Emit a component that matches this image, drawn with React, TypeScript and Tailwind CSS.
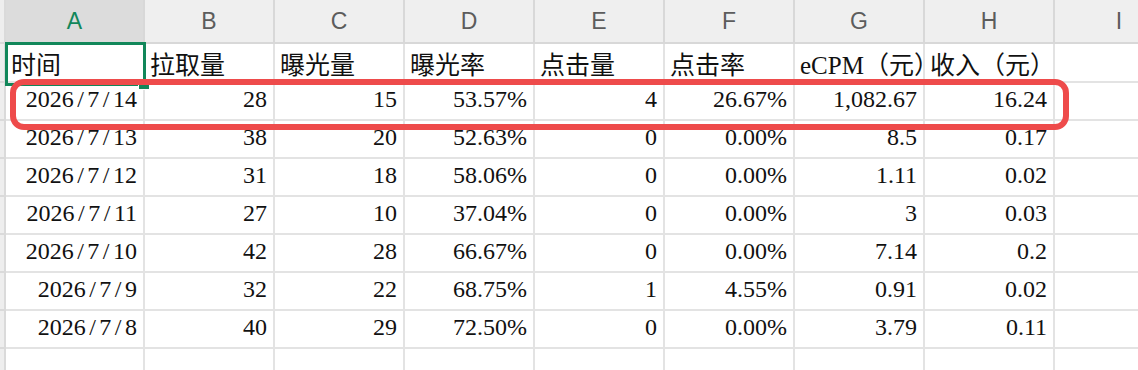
import React from "react"

const cols = ["A", "B", "C", "D", "E", "F", "G", "H", "I"]
const titles = ["时间", "拉取量", "曝光量", "曝光率", "点击量", "点击率", "eCPM（元）", "收入（元）", ""]

const rows = [
  ["2026/7/14", "28", "15", "53.57%", "4", "26.67%", "1,082.67", "16.24"],
  ["2026/7/13", "38", "20", "52.63%", "0", "0.00%", "8.5", "0.17"],
  ["2026/7/12", "31", "18", "58.06%", "0", "0.00%", "1.11", "0.02"],
  ["2026/7/11", "27", "10", "37.04%", "0", "0.00%", "3", "0.03"],
  ["2026/7/10", "42", "28", "66.67%", "0", "0.00%", "7.14", "0.2"],
  ["2026/7/9", "32", "22", "68.75%", "1", "4.55%", "0.91", "0.02"],
  ["2026/7/8", "40", "29", "72.50%", "0", "0.00%", "3.79", "0.11"],
]

const serif = "font-['Liberation_Serif','Noto_Sans_CJK_SC',serif]"

const widthOf = (i: number) => (i === 0 ? "w-[139px]" : "w-[130px]")

const DateText = ({ value }: { value: string }) => {
  const parts = value.split("/")
  return (
    <>
      {parts.map((p, i) => (
        <React.Fragment key={i}>
          {i > 0 && <span className="mx-[3.5px]">/</span>}
          {p}
        </React.Fragment>
      ))}
    </>
  )
}

const RowHead = ({ h }: { h: string }) => (
  <div className={`${h} w-[6px] shrink-0 box-border bg-[#eeeeee] border-r-2 border-b-2 border-[#dadada]`} />
)

export default function App() {
  return (
    <div className={`relative w-[1138px] h-[370px] overflow-hidden bg-white text-[#111] ${serif}`}>
      {/* column letters */}
      <div className="flex h-[44px]">
        <RowHead h="h-[44px]" />
        {cols.map((c, i) => (
          <div
            key={c}
            className={`${widthOf(i)} shrink-0 box-border h-[44px] flex items-center justify-center border-r-2 border-b-2 border-[#d8d8d8] font-['Liberation_Sans',sans-serif] text-[23px] ${
              i === 0 ? "bg-[#dcdcdc] text-[#12875a]" : "bg-[#efefef] text-[#5c5c5c]"
            }`}
          >
            {c}
          </div>
        ))}
      </div>

      {/* titles */}
      <div className="flex h-[39px]">
        <RowHead h="h-[39px]" />
        {titles.map((t, i) => (
          <div
            key={i}
            className={`${widthOf(i)} shrink-0 box-border h-[39px] flex items-end pl-[5px] pb-[3px] border-r-2 border-b-2 border-[#e3e3e3] overflow-hidden whitespace-nowrap text-[25px] leading-none`}
          >
            {t}
          </div>
        ))}
      </div>

      {/* data */}
      {rows.map((r, ri) => (
        <div key={ri} className="flex h-[38px]">
          <RowHead h="h-[38px]" />
          {[...r, ""].map((v, i) => (
            <div
              key={i}
              className={`${widthOf(i)} shrink-0 box-border h-[38px] flex items-end justify-end pr-[6px] pb-[8px] border-r-2 border-b-2 border-[#e3e3e3] overflow-hidden whitespace-nowrap text-[24px] leading-none`}
            >
              {i === 0 ? <DateText value={v} /> : v}
            </div>
          ))}
        </div>
      ))}

      <div className="flex h-[38px]">
        <RowHead h="h-[38px]" />
        {cols.map((c, i) => (
          <div key={c} className={`${widthOf(i)} shrink-0 box-border h-[38px] border-r-2 border-[#e3e3e3]`} />
        ))}
      </div>

      {/* selected cell */}
      <div className="absolute left-[5px] top-[42px] w-[141px] h-[44px] border-[3px] border-[#12875a]" />
      <div className="absolute left-[138px] top-[84px] w-[12px] h-[6px] bg-[#12875a] border border-white" />

      {/* highlight annotation */}
      <div className="absolute left-[10px] top-[79px] w-[1059px] h-[51px] rounded-[14px] border-[6px] border-[#ee4b4b]" />
    </div>
  )
}
